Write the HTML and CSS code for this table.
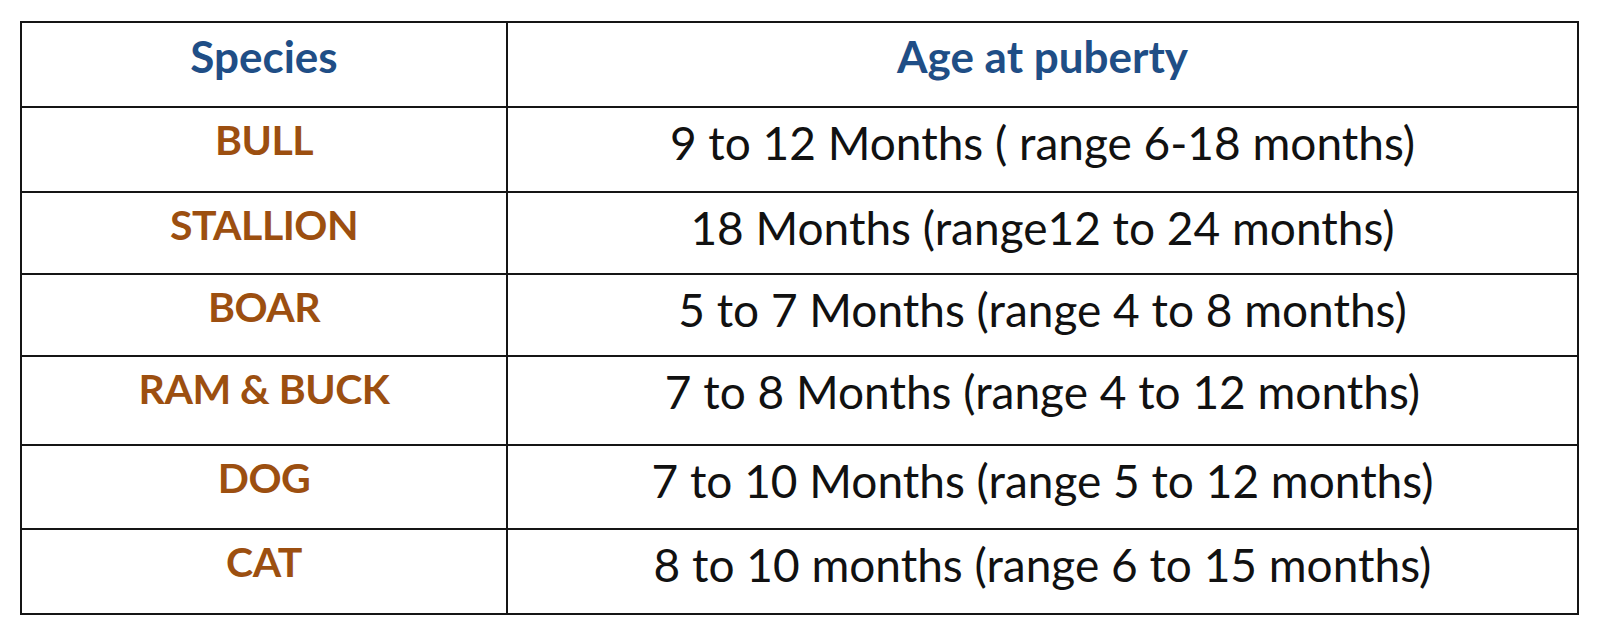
FILE: index.html
```html
<!DOCTYPE html>
<html lang="en">
<head>
<meta charset="utf-8">
<title>Age at puberty</title>
<link rel="stylesheet" href="styles.css">
</head>
<body>
<div class="page">
  <table class="puberty">
    <colgroup>
      <col class="col-species">
      <col class="col-age">
    </colgroup>
    <thead>
      <tr class="r-head">
        <th>Species</th>
        <th>Age at puberty</th>
      </tr>
    </thead>
    <tbody>
      <tr class="r1"><td class="sp">BULL</td><td class="age">9 to 12 Months ( range 6-18 months)</td></tr>
      <tr class="r2"><td class="sp">STALLION</td><td class="age">18 Months (range12 to 24 months)</td></tr>
      <tr class="r3"><td class="sp">BOAR</td><td class="age">5 to 7 Months (range 4 to 8 months)</td></tr>
      <tr class="r4"><td class="sp">RAM &amp; BUCK</td><td class="age">7 to 8 Months (range 4 to 12 months)</td></tr>
      <tr class="r5"><td class="sp">DOG</td><td class="age">7 to 10 Months (range 5 to 12 months)</td></tr>
      <tr class="r6"><td class="sp">CAT</td><td class="age">8 to 10 months (range 6 to 15 months)</td></tr>
    </tbody>
  </table>
</div>
</body>
</html>
```
FILE: styles.css
```css
html, body {
  margin: 0;
  padding: 0;
  background: #ffffff;
}

.page {
  padding: 21px 0 0 20px;
}

.puberty {
  border-collapse: collapse;
  width: 1559px;
  table-layout: fixed;
  font-family: "Lato", "Open Sans", sans-serif;
  border: 2px solid #151515;
}

.col-species { width: 486px; }

.puberty th,
.puberty td {
  border: 2px solid #151515;
  text-align: center;
  vertical-align: top;
  padding: 7px 0 0 0;
  line-height: 1.2;
}

.puberty th {
  font-size: 44px;
  font-weight: 700;
  color: #1f4e86;
}

.sp {
  font-size: 41px;
  font-weight: 700;
  letter-spacing: -0.5px;
  color: #9c4f10;
  padding-top: 8px;
}

.age {
  font-size: 46px;
  font-weight: 400;
  color: #111111;
}

.r-head { height: 85px; }
.r1 { height: 85px; }
.r2 { height: 82px; }
.r3 { height: 82px; }
.r4 { height: 89px; }
.r5 { height: 84px; }
.r6 { height: 85px; }
```
